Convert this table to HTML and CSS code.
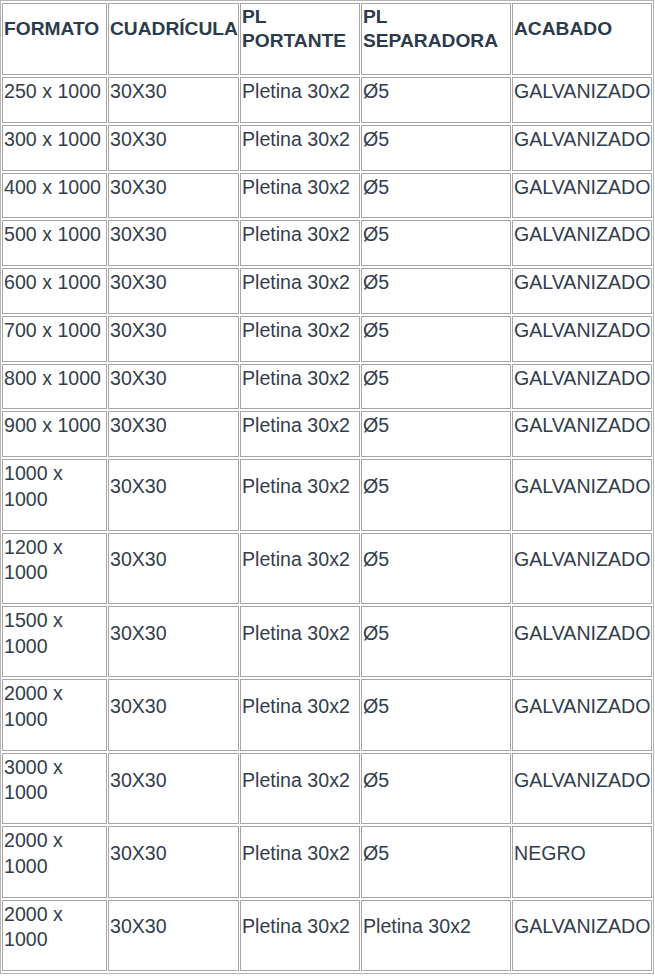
FILE: index.html
```html
<!DOCTYPE html>
<html lang="es">
<head>
<meta charset="utf-8">
<title>Tabla</title>
<link rel="stylesheet" href="styles.css">
</head>
<body>
<table class="spec">
  <thead>
    <tr>
      <th class="c1">FORMATO</th>
      <th class="c2">CUADRÍCULA</th>
      <th class="c3">PL<br>PORTANTE</th>
      <th class="c4">PL<br>SEPARADORA</th>
      <th class="c5">ACABADO</th>
    </tr>
  </thead>
  <tbody>
    <tr><td>250 x 1000</td><td>30X30</td><td>Pletina 30x2</td><td>Ø5</td><td>GALVANIZADO</td></tr>
    <tr><td>300 x 1000</td><td>30X30</td><td>Pletina 30x2</td><td>Ø5</td><td>GALVANIZADO</td></tr>
    <tr><td>400 x 1000</td><td>30X30</td><td>Pletina 30x2</td><td>Ø5</td><td>GALVANIZADO</td></tr>
    <tr><td>500 x 1000</td><td>30X30</td><td>Pletina 30x2</td><td>Ø5</td><td>GALVANIZADO</td></tr>
    <tr><td>600 x 1000</td><td>30X30</td><td>Pletina 30x2</td><td>Ø5</td><td>GALVANIZADO</td></tr>
    <tr><td>700 x 1000</td><td>30X30</td><td>Pletina 30x2</td><td>Ø5</td><td>GALVANIZADO</td></tr>
    <tr><td>800 x 1000</td><td>30X30</td><td>Pletina 30x2</td><td>Ø5</td><td>GALVANIZADO</td></tr>
    <tr><td>900 x 1000</td><td>30X30</td><td>Pletina 30x2</td><td>Ø5</td><td>GALVANIZADO</td></tr>
    <tr><td>1000 x 1000</td><td>30X30</td><td>Pletina 30x2</td><td>Ø5</td><td>GALVANIZADO</td></tr>
    <tr><td>1200 x 1000</td><td>30X30</td><td>Pletina 30x2</td><td>Ø5</td><td>GALVANIZADO</td></tr>
    <tr><td>1500 x 1000</td><td>30X30</td><td>Pletina 30x2</td><td>Ø5</td><td>GALVANIZADO</td></tr>
    <tr><td>2000 x 1000</td><td>30X30</td><td>Pletina 30x2</td><td>Ø5</td><td>GALVANIZADO</td></tr>
    <tr><td>3000 x 1000</td><td>30X30</td><td>Pletina 30x2</td><td>Ø5</td><td>GALVANIZADO</td></tr>
    <tr><td>2000 x 1000</td><td>30X30</td><td>Pletina 30x2</td><td>Ø5</td><td>NEGRO</td></tr>
    <tr><td>2000 x 1000</td><td>30X30</td><td>Pletina 30x2</td><td>Pletina 30x2</td><td>GALVANIZADO</td></tr>
  </tbody>
</table>
</body>
</html>
```

FILE: styles.css
```css
html, body {
  margin: 0;
  padding: 0;
  background: #ffffff;
}

.spec {
  width: 654px;
  table-layout: fixed;
  border-collapse: separate;
  border-spacing: 1px 2px;
  border: 1px solid #b4b4b4;
  font-family: "Liberation Sans", Arial, sans-serif;
  font-size: 19.6px;
  color: #323e4c;
}

.spec th,
.spec td {
  box-sizing: border-box;
  border: 1px solid #a6a6a6;
  text-align: left;
  vertical-align: middle;
}

.spec th {
  font-weight: bold;
  font-size: 19.2px;
  color: #2c3b4c;
  line-height: 24px;
  padding: 1px 1px 21px 1px;
}

.spec td {
  font-weight: normal;
  line-height: 25.6px;
  padding: 1px 1px 17.2px 1px;
}

.c1 { width: 105px; }
.c2 { width: 131px; }
.c3 { width: 120px; }
.c4 { width: 150px; }
.c5 { width: 140px; }
```
